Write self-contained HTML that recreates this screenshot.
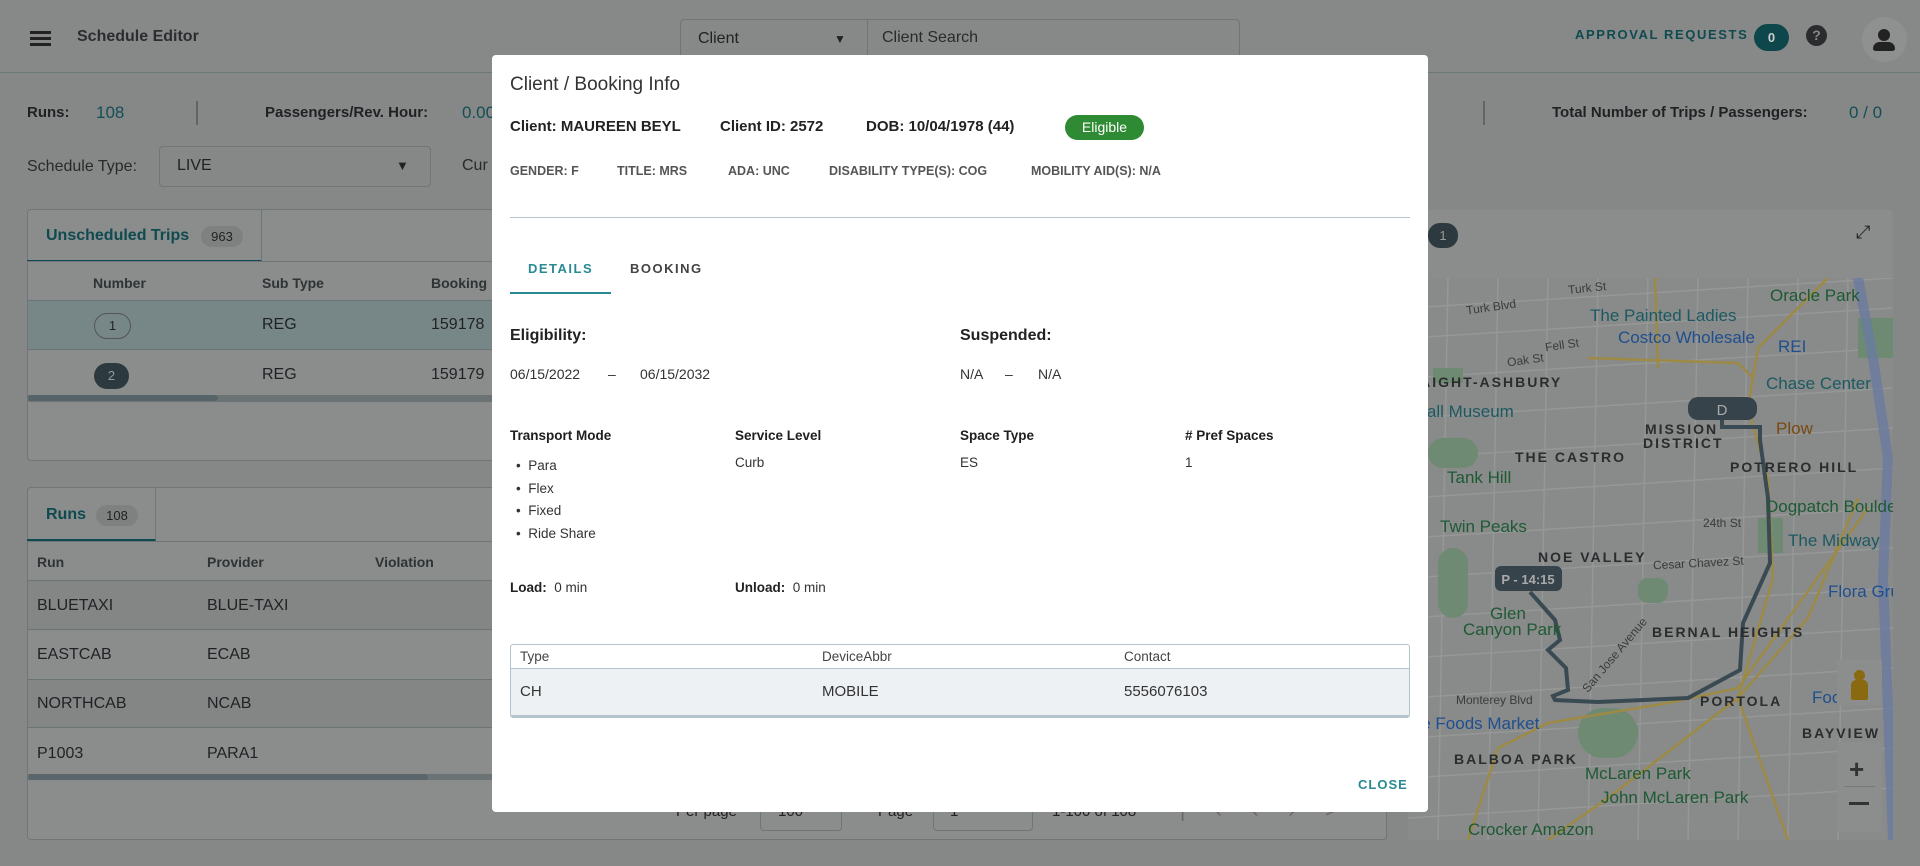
<!DOCTYPE html>
<html><head><meta charset="utf-8"><style>
*{box-sizing:border-box;margin:0;padding:0}
body{width:1920px;height:866px;overflow:hidden;background:#868787;font-family:"Liberation Sans",Arial,sans-serif;position:relative;color:#1f2224}
.a{position:absolute;white-space:nowrap}
.panel{position:absolute;background:#8b8c8c;border:1px solid #6f7677;border-radius:4px}
.m{position:absolute;white-space:nowrap}
.lbl{font-size:14px;font-weight:bold;color:#202020}
.val{font-size:14px;color:#333}
.mp{position:absolute;white-space:nowrap;font-size:17px}
.g{color:#1e5a34}.b{color:#1f4f8f}.t{color:#1c5a62}
.d{color:#2a2c2e;font-weight:bold;letter-spacing:2px;font-size:14px}
.s{color:#3a3b3c;font-size:12px}
</style></head><body>
<!-- header -->
<div class="a" style="left:0;top:0;width:1920px;height:73px;border-bottom:1px solid #6c7779;background:#878888"></div>
<div class="a" style="left:30px;top:31px;width:21px;height:3px;background:#222;box-shadow:0 6px 0 #222,0 12px 0 #222"></div>
<div class="a" style="left:77px;top:28px;font-size:16px;font-weight:bold;color:#2b2e30">Schedule Editor</div>
<div class="a" style="left:680px;top:19px;width:560px;height:44px;border:1px solid #6f7677;border-radius:4px"></div>
<div class="a" style="left:867px;top:19px;width:1px;height:44px;background:#6f7677"></div>
<div class="a" style="left:698px;top:30px;font-size:16px;color:#222">Client</div>
<div class="a" style="left:834px;top:32px;font-size:12px;color:#222">▼</div>
<div class="a" style="left:882px;top:29px;font-size:16px;color:#2a2a2a">Client Search</div>
<div class="a" style="left:1575px;top:27px;font-size:13px;font-weight:bold;letter-spacing:1.6px;color:#0f4a50">APPROVAL REQUESTS</div>
<div class="a" style="left:1754px;top:24px;width:35px;height:27px;border-radius:14px;background:#0d474c;color:#ccc;font-size:13px;font-weight:bold;text-align:center;line-height:27px">0</div>
<div class="a" style="left:1806px;top:25px;width:21px;height:21px;border-radius:50%;background:#2a2c2e;color:#888;font-size:14px;font-weight:bold;text-align:center;line-height:21px">?</div>
<div class="a" style="left:1862px;top:17px;width:45px;height:45px;border-radius:50%;background:#8f9090"></div>
<div class="a" style="left:1878px;top:29px;width:12px;height:12px;border-radius:50%;background:#222"></div>
<div class="a" style="left:1873px;top:42px;width:22px;height:9px;border-radius:11px 11px 4px 4px;background:#222"></div>
<!-- stats -->
<div class="a" style="left:27px;top:104px;font-size:15px;font-weight:bold">Runs:</div>
<div class="a" style="left:96px;top:103px;font-size:17px;color:#134f56">108</div>
<div class="a" style="left:196px;top:101px;width:2px;height:24px;background:#5f6668"></div>
<div class="a" style="left:265px;top:104px;font-size:15px;font-weight:bold">Passengers/Rev. Hour:</div>
<div class="a" style="left:462px;top:103px;font-size:17px;color:#134f56">0.00</div>
<div class="a" style="left:1483px;top:101px;width:2px;height:24px;background:#5f6668"></div>
<div class="a" style="left:1552px;top:104px;font-size:15px;font-weight:bold">Total Number of Trips / Passengers:</div>
<div class="a" style="left:1849px;top:103px;font-size:17px;color:#134f56">0 / 0</div>
<div class="a" style="left:27px;top:158px;font-size:16px;color:#2a2a2a">Schedule Type:</div>
<div class="a" style="left:159px;top:146px;width:272px;height:41px;border:1px solid #6f7677;border-radius:4px"></div>
<div class="a" style="left:177px;top:157px;font-size:16px;color:#222">LIVE</div>
<div class="a" style="left:396px;top:158px;font-size:13px;color:#222">▼</div>
<div class="a" style="left:462px;top:157px;font-size:16px;color:#2a2a2a">Cur</div>
<!-- unscheduled panel -->
<div class="panel" style="left:27px;top:209px;width:1360px;height:252px"></div>
<div class="a" style="left:27px;top:209px;width:235px;height:53px;border-right:1px solid #6f7677;border-bottom:2px solid #0e4a50"></div>
<div class="a" style="left:27px;top:261px;width:1360px;height:1px;background:#6f7677"></div>
<div class="a" style="left:46px;top:227px;font-size:16px;font-weight:bold;color:#0e4a50">Unscheduled Trips</div>
<div class="a" style="left:201px;top:226px;width:42px;height:21px;border-radius:11px;background:#7f8181;font-size:13px;text-align:center;line-height:21px;color:#222">963</div>
<div class="a" style="left:93px;top:275px;font-size:14px;font-weight:bold;color:#2e3335">Number</div>
<div class="a" style="left:262px;top:275px;font-size:14px;font-weight:bold;color:#2e3335">Sub Type</div>
<div class="a" style="left:431px;top:275px;font-size:14px;font-weight:bold;color:#2e3335">Booking</div>
<div class="a" style="left:28px;top:300px;width:1358px;height:50px;background:#778787;border-top:1px solid #6a7476;border-bottom:1px solid #6a7476"></div>
<div class="a" style="left:94px;top:313px;width:37px;height:26px;border:1px solid #555;border-radius:13px;font-size:13px;text-align:center;line-height:24px">1</div>
<div class="a" style="left:262px;top:316px;font-size:16px">REG</div>
<div class="a" style="left:431px;top:316px;font-size:16px">159178</div>
<div class="a" style="left:94px;top:363px;width:35px;height:26px;border-radius:13px;background:#2c3a40;color:#999;font-size:13px;text-align:center;line-height:26px">2</div>
<div class="a" style="left:262px;top:366px;font-size:16px">REG</div>
<div class="a" style="left:431px;top:366px;font-size:16px">159179</div>
<div class="a" style="left:28px;top:395px;width:1358px;height:7px;background:#6b7375"></div>
<div class="a" style="left:28px;top:395px;width:190px;height:6px;border-radius:3px;background:#566469"></div>
<!-- runs panel -->
<div class="panel" style="left:27px;top:487px;width:1360px;height:353px"></div>
<div class="a" style="left:27px;top:487px;width:129px;height:54px;border-right:1px solid #6f7677;border-bottom:2px solid #0e4a50"></div>
<div class="a" style="left:27px;top:541px;width:1360px;height:1px;background:#6f7677"></div>
<div class="a" style="left:46px;top:506px;font-size:16px;font-weight:bold;color:#0e4a50">Runs</div>
<div class="a" style="left:96px;top:505px;width:42px;height:21px;border-radius:11px;background:#7f8181;font-size:13px;text-align:center;line-height:21px;color:#222">108</div>
<div class="a" style="left:37px;top:554px;font-size:14px;font-weight:bold;color:#2e3335">Run</div>
<div class="a" style="left:207px;top:554px;font-size:14px;font-weight:bold;color:#2e3335">Provider</div>
<div class="a" style="left:375px;top:554px;font-size:14px;font-weight:bold;color:#2e3335">Violation</div>
<div class="a" style="left:28px;top:580px;width:1358px;height:49px;background:#848585;border-top:1px solid #6a7476"></div>
<div class="a" style="left:28px;top:629px;width:1358px;height:1px;background:#6a7476"></div>
<div class="a" style="left:28px;top:679px;width:1358px;height:49px;background:#848585;border-top:1px solid #6a7476;border-bottom:1px solid #6a7476"></div>
<div class="a" style="left:37px;top:597px;font-size:16px">BLUETAXI</div><div class="a" style="left:207px;top:597px;font-size:16px">BLUE-TAXI</div>
<div class="a" style="left:37px;top:646px;font-size:16px">EASTCAB</div><div class="a" style="left:207px;top:646px;font-size:16px">ECAB</div>
<div class="a" style="left:37px;top:695px;font-size:16px">NORTHCAB</div><div class="a" style="left:207px;top:695px;font-size:16px">NCAB</div>
<div class="a" style="left:37px;top:745px;font-size:16px">P1003</div><div class="a" style="left:207px;top:745px;font-size:16px">PARA1</div>
<div class="a" style="left:28px;top:774px;width:1358px;height:6px;background:#6b7375"></div>
<div class="a" style="left:28px;top:774px;width:400px;height:6px;border-radius:3px;background:#5a666b"></div>
<div class="a" style="left:676px;top:803px;font-size:15px;color:#222">Per page</div>
<div class="a" style="left:760px;top:793px;width:82px;height:38px;border:1px solid #6f7677;border-radius:4px"></div>
<div class="a" style="left:778px;top:803px;font-size:15px;color:#222">100</div>
<div class="a" style="left:878px;top:803px;font-size:15px;color:#222">Page</div>
<div class="a" style="left:933px;top:793px;width:100px;height:38px;border:1px solid #6f7677;border-radius:4px"></div>
<div class="a" style="left:950px;top:803px;font-size:15px;color:#222">1</div>
<div class="a" style="left:1052px;top:803px;font-size:15px;color:#222">1-100 of 108</div>
<div class="a" style="left:1180px;top:800px;font-size:20px;color:#666;letter-spacing:30px">|‹‹›&gt;</div>
<!-- map panel -->
<div class="a" style="left:1408px;top:210px;width:485px;height:630px;background:#8b8c8c;border-radius:4px"></div>
<div class="a" style="left:1428px;top:223px;width:30px;height:25px;border-radius:12px;background:#2c3a40;color:#999;font-size:13px;line-height:25px;text-align:center">1</div>
<div class="a" style="left:1856px;top:222px;font-size:18px;color:#222">⤢</div>
<div class="a" style="left:1408px;top:278px;width:485px;height:562px;background:#898a8a;overflow:hidden">
<svg width="485" height="562" style="position:absolute;left:0;top:0">
<g stroke="#969797" stroke-width="1.5" fill="none">
<path d="M0 30 L485 0 M0 60 L485 30 M0 100 L485 70 M0 140 L485 110 M0 180 L485 150 M0 220 L485 190 M0 260 L485 230 M0 300 L485 270 M0 340 L485 310 M0 380 L485 350 M0 420 L485 390 M0 460 L485 430 M0 500 L485 470 M0 540 L485 510"/>
<path d="M40 0 L30 562 M90 0 L80 562 M140 0 L130 562 M190 0 L180 562 M240 0 L230 562 M290 0 L280 562 M340 0 L330 562 M390 0 L380 562 M440 0 L430 562"/>
</g>
<g fill="#6f8a72"><rect x="25" y="90" width="30" height="15"/><rect x="20" y="160" width="50" height="30" rx="15"/><rect x="30" y="270" width="30" height="70" rx="15"/><rect x="170" y="430" width="60" height="50" rx="25"/><rect x="230" y="300" width="30" height="25" rx="10"/><rect x="350" y="240" width="25" height="35"/><rect x="450" y="40" width="35" height="40"/></g>
<path d="M450 0 L465 80 L480 180 L475 300 L485 562" stroke="#6a7aa0" stroke-width="10" fill="none" opacity=".8"/>
<g stroke="#9c8a45" stroke-width="2.5" fill="none">
<path d="M247 0 L250 90"/><path d="M420 0 L350 70 L340 130 L360 200 L365 300 L330 420 L380 562"/>
<path d="M180 80 L330 85 L345 100"/><path d="M450 220 L400 340 L330 420 L200 520 L140 562"/>
<path d="M460 230 L330 410 L260 425 L140 445 L90 470 L60 562"/>
</g>
<path d="M314 142 L314 149 L352 149 L352 162 L360 220 L362 285 L335 345 L332 392 L280 420 L190 424 L147 422 L145 418 L160 412 L158 390 L140 372 L152 362 L147 342 L122 314" stroke="#3a4a52" stroke-width="4" fill="none"/>
<rect x="280" y="119" width="69" height="23" rx="10" fill="#36434a"/>
<text x="314" y="137" fill="#aaa" font-size="15" text-anchor="middle" font-family="Liberation Sans">D</text>
<rect x="87" y="288" width="67" height="25" rx="6" fill="#36434a"/>
<text x="120" y="306" fill="#aaa" font-size="13" font-weight="bold" text-anchor="middle" font-family="Liberation Sans">P - 14:15</text>
</svg>
<div class="mp s" style="left:58px;top:22px;transform:rotate(-8deg)">Turk Blvd</div>
<div class="mp s" style="left:160px;top:3px;transform:rotate(-6deg)">Turk St</div>
<div class="mp t" style="left:182px;top:28px">The Painted Ladies</div>
<div class="mp b" style="left:210px;top:50px">Costco Wholesale</div>
<div class="mp b" style="left:370px;top:59px">REI</div>
<div class="mp g" style="left:362px;top:8px">Oracle Park</div>
<div class="mp s" style="left:137px;top:60px;transform:rotate(-8deg)">Fell St</div>
<div class="mp s" style="left:99px;top:75px;transform:rotate(-8deg)">Oak St</div>
<div class="mp d" style="left:0;top:96px">HAIGHT-ASHBURY</div>
<div class="mp t" style="left:0;top:124px">ndall Museum</div>
<div class="mp t" style="left:358px;top:96px">Chase Center</div>
<div class="mp d" style="left:237px;top:143px">MISSION</div>
<div class="mp d" style="left:235px;top:157px">DISTRICT</div>
<div class="mp d" style="left:107px;top:171px">THE CASTRO</div>
<div class="mp d" style="left:322px;top:181px">POTRERO HILL</div>
<div class="mp" style="left:368px;top:141px;color:#7a4a10">Plow</div>
<div class="mp g" style="left:39px;top:190px">Tank Hill</div>
<div class="mp g" style="left:358px;top:219px">Dogpatch Boulders</div>
<div class="mp g" style="left:32px;top:239px">Twin Peaks</div>
<div class="mp t" style="left:380px;top:253px">The Midway</div>
<div class="mp d" style="left:130px;top:271px">NOE VALLEY</div>
<div class="mp s" style="left:245px;top:278px;transform:rotate(-3deg)">Cesar Chavez St</div>
<div class="mp s" style="left:295px;top:238px">24th St</div>
<div class="mp g" style="left:82px;top:326px">Glen</div>
<div class="mp g" style="left:55px;top:342px">Canyon Park</div>
<div class="mp b" style="left:420px;top:304px">Flora Gru</div>
<div class="mp d" style="left:244px;top:346px">BERNAL HEIGHTS</div>
<div class="mp s" style="left:160px;top:370px;transform:rotate(-50deg)">San Jose Avenue</div>
<div class="mp s" style="left:48px;top:415px">Monterey Blvd</div>
<div class="mp d" style="left:292px;top:415px">PORTOLA</div>
<div class="mp b" style="left:404px;top:410px">Foo</div>
<div class="mp b" style="left:0;top:436px">ole Foods Market</div>
<div class="mp d" style="left:394px;top:447px">BAYVIEW</div>
<div class="mp d" style="left:46px;top:473px">BALBOA PARK</div>
<div class="mp g" style="left:177px;top:486px">McLaren Park</div>
<div class="mp g" style="left:193px;top:510px">John McLaren Park</div>
<div class="mp g" style="left:60px;top:542px">Crocker Amazon</div>
<div class="a" style="left:429px;top:382px;width:45px;height:45px;background:#8c8d8d;border-radius:2px"></div>
<div class="a" style="left:446px;top:392px;width:11px;height:11px;border-radius:50%;background:#8a6a10"></div>
<div class="a" style="left:443px;top:402px;width:17px;height:20px;border-radius:5px 5px 2px 2px;background:#8a6a10"></div>
<div class="a" style="left:429px;top:464px;width:45px;height:90px;background:#8c8d8d;border-radius:2px"></div>
<div class="a" style="left:441px;top:476px;font-size:26px;font-weight:bold;color:#333">+</div>
<div class="a" style="left:436px;top:508px;width:31px;height:1px;background:#777"></div>
<div class="a" style="left:441px;top:524px;width:20px;height:3px;background:#333"></div>
</div>
<!-- modal -->
<div class="a" style="left:492px;top:55px;width:936px;height:757px;background:#fff;border-radius:4px">
<div class="m" style="left:18px;top:19px;font-size:19px;color:#333">Client / Booking Info</div>
<div class="m" style="left:18px;top:63px;font-size:15px;font-weight:bold;color:#222">Client: MAUREEN BEYL</div>
<div class="m" style="left:228px;top:63px;font-size:15px;font-weight:bold;color:#222">Client ID: 2572</div>
<div class="m" style="left:374px;top:63px;font-size:15px;font-weight:bold;color:#222">DOB: 10/04/1978 (44)</div>
<div class="m" style="left:573px;top:60px;width:79px;height:25px;border-radius:13px;background:#2e8b34;color:#fff;font-size:14px;text-align:center;line-height:25px">Eligible</div>
<div class="m" style="left:18px;top:109px;font-size:12.5px;font-weight:bold;color:#555">GENDER: F</div>
<div class="m" style="left:125px;top:109px;font-size:12.5px;font-weight:bold;color:#555">TITLE: MRS</div>
<div class="m" style="left:236px;top:109px;font-size:12.5px;font-weight:bold;color:#555">ADA: UNC</div>
<div class="m" style="left:337px;top:109px;font-size:12.5px;font-weight:bold;color:#555">DISABILITY TYPE(S): COG</div>
<div class="m" style="left:539px;top:109px;font-size:12.5px;font-weight:bold;color:#555">MOBILITY AID(S): N/A</div>
<div class="m" style="left:18px;top:162px;width:900px;height:1px;background:#b4c4cc"></div>
<div class="m" style="left:36px;top:206px;font-size:13px;font-weight:bold;letter-spacing:1.5px;color:#2a8a92">DETAILS</div>
<div class="m" style="left:138px;top:206px;font-size:13px;font-weight:bold;letter-spacing:1.5px;color:#444">BOOKING</div>
<div class="m" style="left:18px;top:237px;width:101px;height:2px;background:#2a8a92"></div>
<div class="m" style="left:18px;top:272px;font-size:16px;font-weight:bold;color:#222">Eligibility:</div>
<div class="m" style="left:468px;top:272px;font-size:16px;font-weight:bold;color:#222">Suspended:</div>
<div class="m val" style="left:18px;top:311px">06/15/2022</div>
<div class="m val" style="left:116px;top:311px">–</div>
<div class="m val" style="left:148px;top:311px">06/15/2032</div>
<div class="m val" style="left:468px;top:311px">N/A</div>
<div class="m val" style="left:513px;top:311px">–</div>
<div class="m val" style="left:546px;top:311px">N/A</div>
<div class="m lbl" style="left:18px;top:373px;font-size:13.5px">Transport Mode</div>
<div class="m lbl" style="left:243px;top:373px;font-size:13.5px">Service Level</div>
<div class="m lbl" style="left:468px;top:373px;font-size:13.5px">Space Type</div>
<div class="m lbl" style="left:693px;top:373px;font-size:13.5px"># Pref Spaces</div>
<div class="m val" style="left:24px;top:400px;line-height:22.5px;font-size:13.5px">•&nbsp;&nbsp;Para<br>•&nbsp;&nbsp;Flex<br>•&nbsp;&nbsp;Fixed<br>•&nbsp;&nbsp;Ride Share</div>
<div class="m val" style="left:243px;top:400px;font-size:13.5px">Curb</div>
<div class="m val" style="left:468px;top:400px;font-size:13.5px">ES</div>
<div class="m val" style="left:693px;top:400px;font-size:13.5px">1</div>
<div class="m" style="left:18px;top:525px;font-size:13.5px;color:#333"><b style="color:#222">Load:</b>&nbsp; 0 min</div>
<div class="m" style="left:243px;top:525px;font-size:13.5px;color:#333"><b style="color:#222">Unload:</b>&nbsp; 0 min</div>
<div class="m" style="left:18px;top:589px;width:900px;height:74px;border:1px solid #b4c4cc;border-radius:3px;overflow:hidden">
<div class="m" style="left:0;top:0;width:900px;height:24px;border-bottom:1px solid #b4c4cc"></div>
<div class="m" style="left:9px;top:4px;font-size:13.5px;color:#444">Type</div>
<div class="m" style="left:311px;top:4px;font-size:13.5px;color:#444">DeviceAbbr</div>
<div class="m" style="left:613px;top:4px;font-size:13.5px;color:#444">Contact</div>
<div class="m" style="left:0;top:24px;width:900px;height:48px;background:#edf1f4;border-bottom:2px solid #b4c4cc"></div>
<div class="m" style="left:9px;top:38px;font-size:15px;color:#333">CH</div>
<div class="m" style="left:311px;top:38px;font-size:15px;color:#333">MOBILE</div>
<div class="m" style="left:613px;top:38px;font-size:15px;color:#333">5556076103</div>
</div>
<div class="m" style="left:866px;top:722px;font-size:13px;font-weight:bold;letter-spacing:1px;color:#2a8a92">CLOSE</div>
</div>
</body></html>
